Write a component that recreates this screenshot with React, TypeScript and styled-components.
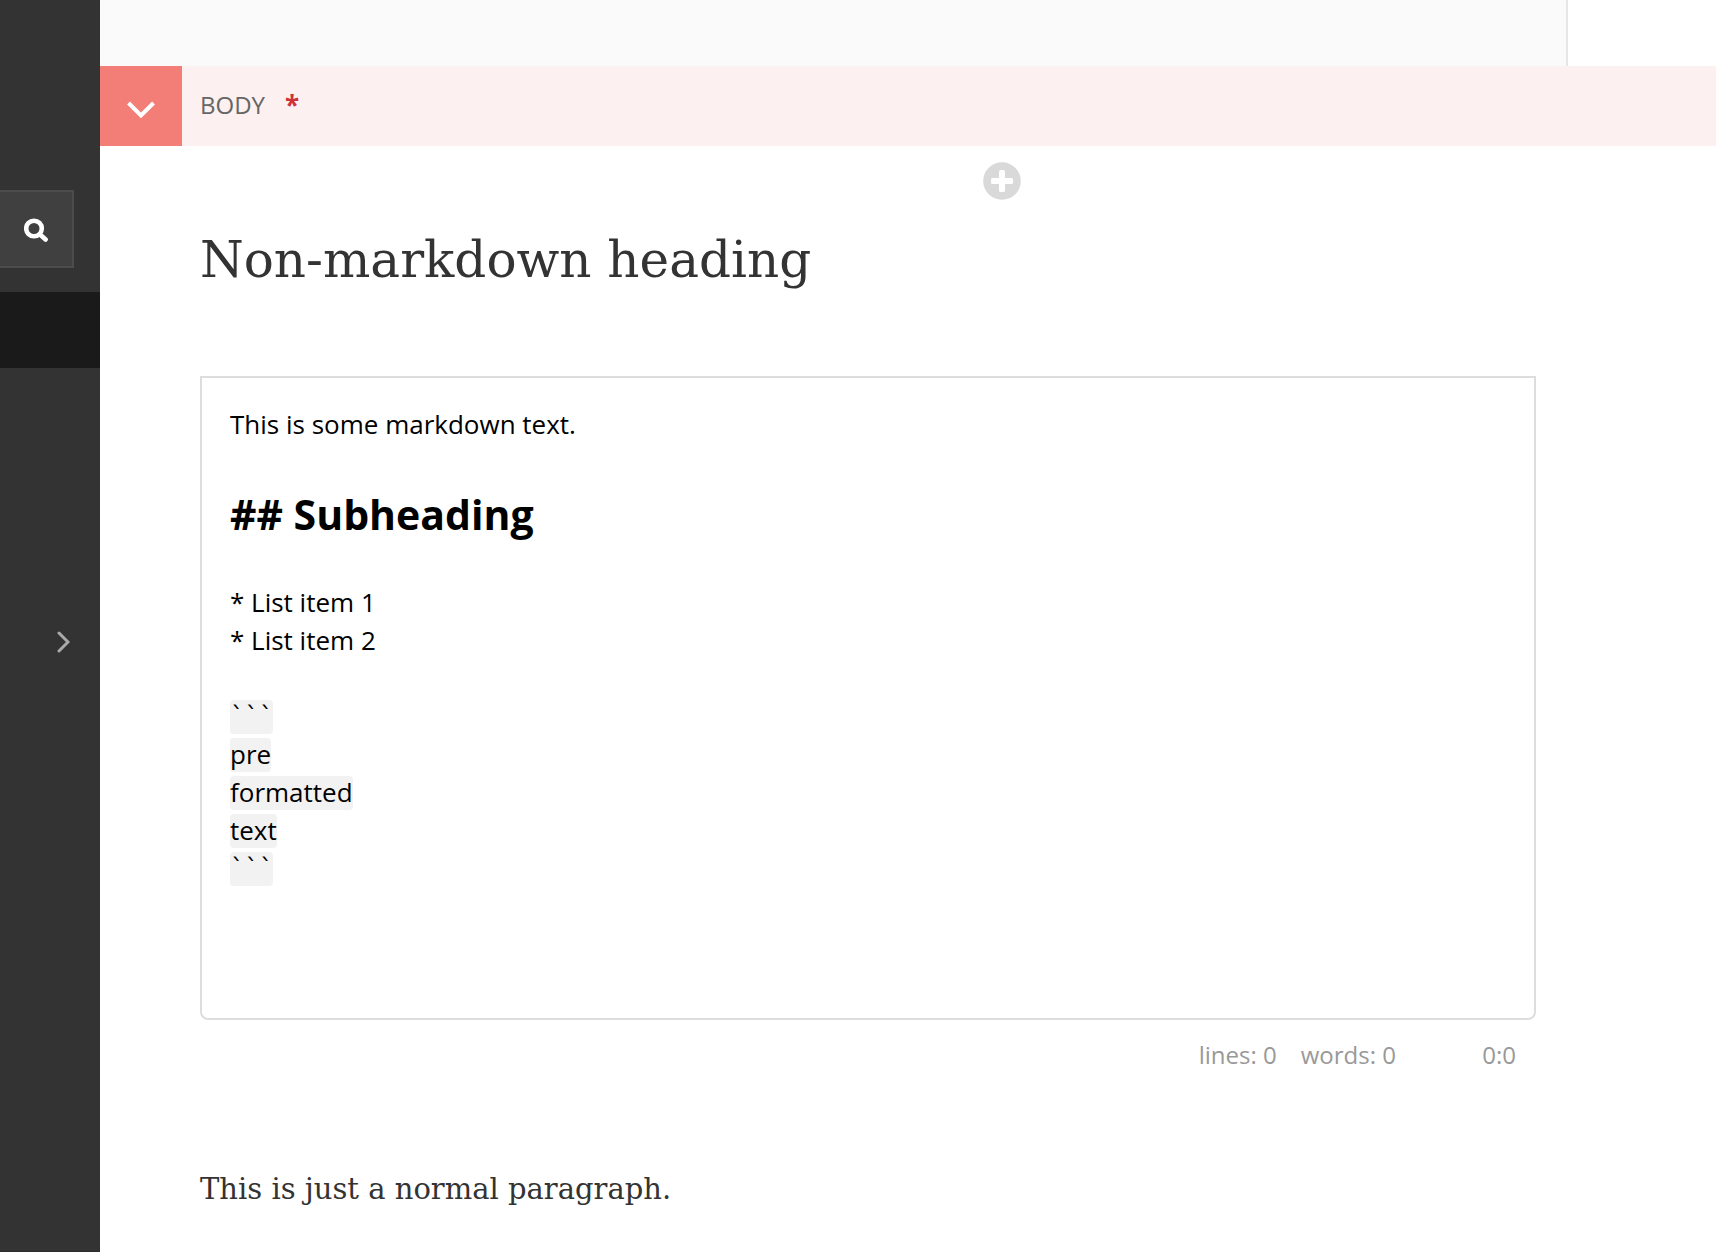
import React from "react";
import styled, { createGlobalStyle } from "styled-components";

const GlobalStyle = createGlobalStyle`
  *, *::before, *::after { box-sizing: border-box; }
  body {
    margin: 0;
    background: #fff;
    color: #333;
    font-family: "Open Sans", "Noto Sans", sans-serif;
    font-size: 26px;
  }
`;

const Page = styled.div`
  display: flex;
  min-height: 100vh;
`;

const Sidebar = styled.aside`
  display: flex;
  flex-direction: column;
  flex: 0 0 100px;
  padding-top: 190px;
  background: #333;
  border-bottom: 1px solid #2e2c2e;
`;

const SearchForm = styled.form`
  display: flex;
  margin: 0 26px 24px 0;
`;

const SearchButton = styled.button`
  display: flex;
  flex: 1;
  align-items: center;
  height: 78px;
  padding: 2px 0 0 24px;
  border: 2px solid #4c4c4c;
  border-left: 0;
  background: #404040;
  color: #fff;
`;

const NavList = styled.nav`
  display: flex;
  flex-direction: column;
  gap: 236px;
`;

const NavLink = styled.a<{ $active?: boolean }>`
  display: flex;
  align-items: center;
  justify-content: flex-end;
  height: 76px;
  padding-right: 30px;
  background: ${(p) => (p.$active ? "#1a1a1a" : "transparent")};
  color: #aaa;
`;

const Main = styled.main`
  flex: 1;
  min-width: 0;
`;

const PreviousPanel = styled.div`
  height: 66px;
  margin-right: 148px;
  background: #fafafa;
  border-right: 2px solid #e6e6e6;
`;

const PanelHeader = styled.header`
  display: flex;
  height: 80px;
  background: #fcf1f0;
`;

const ToggleButton = styled.button`
  display: flex;
  align-items: center;
  justify-content: center;
  width: 82px;
  padding: 8px 0 0;
  border: 0;
  background: #f37e77;
  color: #fff;
`;

const PanelTitle = styled.h2`
  display: flex;
  gap: 20px;
  margin: 0;
  padding: 20px 18px;
  color: #666;
  font-size: 24px;
  font-weight: 400;
  line-height: 38px;
`;

const Required = styled.span`
  color: #cd3238;
  font-size: 26px;
  font-weight: 700;
`;

const AddRow = styled.div`
  display: flex;
  justify-content: center;
  padding: 16px 0 0 188px;
`;

const AddButton = styled.button`
  display: flex;
  padding: 0;
  border: 0;
  background: none;
  color: #d9d9d9;
`;

const Stream = styled.div`
  padding: 0 180px 0 100px;
`;

const Heading = styled.h3`
  margin: 26px 0 82px;
  font-family: "DejaVu Serif", serif;
  font-size: 50px;
  font-weight: 400;
  line-height: 68px;
`;

const Editor = styled.div`
  min-height: 644px;
  padding: 27px 28px;
  border: 2px solid #ddd;
  border-radius: 0 0 8px 8px;
  color: #000;
  line-height: 38px;
  outline: none;
`;

const Line = styled.div`
  min-height: 38px;
`;

const SubheadingLine = styled(Line)`
  padding-top: 2px;
  font-size: 41px;
  font-weight: 700;
  line-height: 62px;
`;

const CodeLine = styled(Line)`
  display: flex;
  padding: 3px 0 1px;
`;

const Code = styled.span<{ $fence: boolean }>`
  padding-bottom: 2px;
  border-radius: 4px;
  background: #f2f2f2;
  font-family: ${(p) => (p.$fence ? '"DejaVu Sans Mono", monospace' : "inherit")};
  font-size: ${(p) => (p.$fence ? "24px" : "inherit")};
  line-height: 32px;
`;

const StatusBar = styled.div`
  display: flex;
  justify-content: flex-end;
  gap: 24px;
  padding: 15px 20px;
  color: #999;
  font-size: 24px;
  line-height: 40px;
  text-align: right;
`;

const Cursor = styled.span`
  min-width: 96px;
`;

const Paragraph = styled.p`
  margin: 78px 0 0;
  font-family: "DejaVu Serif", serif;
  font-size: 29px;
  line-height: 42px;
`;

const codeLines = ["```", "pre", "formatted", "text", "```"];

export default function App() {
  return (
    <Page>
      <GlobalStyle />
      <Sidebar>
        <SearchForm role="search">
          <SearchButton type="button" aria-label="Search">
            <svg width="24" height="24" viewBox="0 0 24 24" fill="none" stroke="currentColor">
              <circle cx="10" cy="10.5" r="7.8" strokeWidth="4.6" />
              <path d="M16 16.5l5.6 5" strokeWidth="4.6" strokeLinecap="round" />
            </svg>
          </SearchButton>
        </SearchForm>
        <NavList aria-label="Main menu">
          <NavLink href="#explorer" $active aria-label="Explorer" />
          <NavLink href="#settings" aria-label="Settings">
            <svg width="13" height="22" viewBox="0 0 13 22" fill="none" stroke="currentColor" strokeWidth="3" strokeLinecap="round">
              <path d="M2 2l9 9-9 9" />
            </svg>
          </NavLink>
        </NavList>
      </Sidebar>
      <Main>
        <PreviousPanel />
        <PanelHeader>
          <ToggleButton type="button" aria-label="Toggle body section">
            <svg width="28" height="18" viewBox="0 0 28 18" fill="none" stroke="currentColor" strokeWidth="4">
              <path d="M1.5 2L14 14.5 26.5 2" />
            </svg>
          </ToggleButton>
          <PanelTitle>
            BODY <Required>*</Required>
          </PanelTitle>
        </PanelHeader>
        <AddRow>
          <AddButton type="button" aria-label="Add block">
            <svg width="38" height="38" viewBox="0 0 38 38">
              <circle cx="19" cy="19" r="18.8" fill="currentColor" />
              <rect x="16" y="8" width="6" height="22" rx="1.5" fill="#fff" />
              <rect x="8" y="16" width="22" height="6" rx="1.5" fill="#fff" />
            </svg>
          </AddButton>
        </AddRow>
        <Stream>
          <Heading>Non-markdown heading</Heading>
          <Editor role="textbox" aria-multiline="true" aria-label="Markdown" contentEditable suppressContentEditableWarning spellCheck={false}>
            <Line>This is some markdown text.</Line>
            <Line />
            <SubheadingLine>## Subheading</SubheadingLine>
            <Line />
            <Line>* List item 1</Line>
            <Line>* List item 2</Line>
            <Line />
            {codeLines.map((text, i) => (
              <CodeLine key={i}>
                <Code $fence={text === "```"}>{text}</Code>
              </CodeLine>
            ))}
          </Editor>
          <StatusBar>
            <span>lines: 0</span>
            <span>words: 0</span>
            <Cursor>0:0</Cursor>
          </StatusBar>
          <Paragraph>This is just a normal paragraph.</Paragraph>
        </Stream>
      </Main>
    </Page>
  );
}
